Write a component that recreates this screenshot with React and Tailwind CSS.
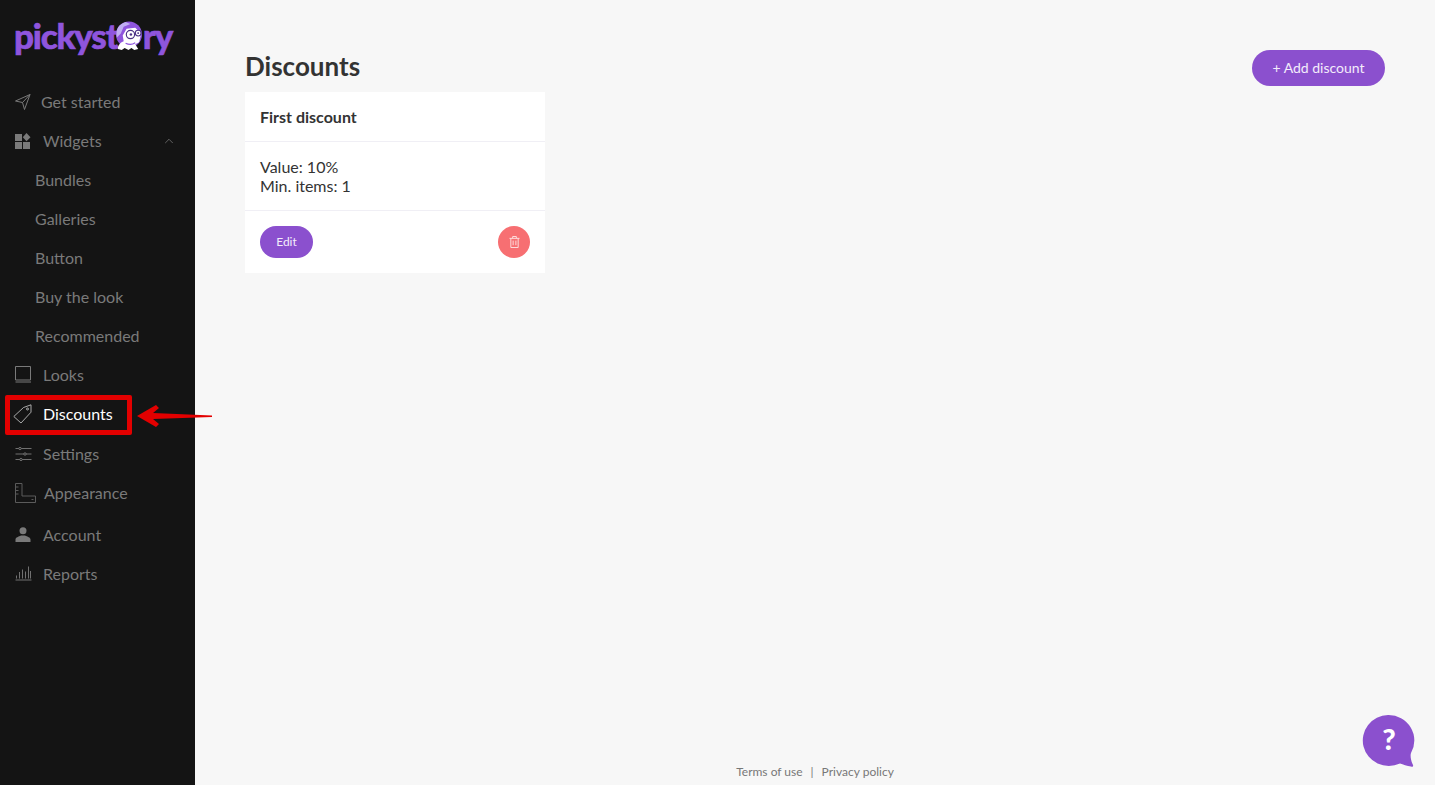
import { ChevronUp } from 'lucide-react';

// ─── Sidebar icons ────────────────────────────────────────────────────────────
const stroke = { fill: 'none', stroke: 'currentColor', strokeWidth: 1 };

const icons = {
    send: (
        <svg width="16" height="16" viewBox="0 0 16 16" {...stroke}>
            <path d="M15 .5.5 7l7 1.500 2 7L15 .5ZM15 .5 7.500 8.500" strokeLinejoin="round" />
        </svg>
    ),
    widgets: (
        <svg width="16" height="16" viewBox="0 0 16 16" fill="currentColor">
            <rect x="0" y="1" width="7" height="7" />
            <rect x="0" y="9" width="7" height="7" />
            <rect x="8" y="9" width="7" height="7" />
            <path d="M11.500 0 15.500 4.200 11.500 8.200 7.800 4.200Z" />
        </svg>
    ),
    looks: (
        <svg width="17" height="17" viewBox="0 0 17 17" {...stroke}>
            <path d="M.5.5h15v13.500H.5zM.5 16h15.500" />
        </svg>
    ),
    tag: (
        <svg width="19" height="20" viewBox="0 0 19 20" {...stroke} strokeWidth="0.8" className="opacity-80">
            <path d="M10.500 3.500 18 .8v7.400L8 19 .8 12.500 10.500 3.500Z" strokeLinejoin="round" />
            <circle cx="14.500" cy="5" r="1" />
        </svg>
    ),
    settings: (
        <svg width="17" height="14" viewBox="0 0 17 14" {...stroke} strokeWidth="0.9">
            <path d="M.5 1.500h16M.5 7h16M.5 12.500h16" />
            <circle cx="5" cy="1.500" r="1.200" fill="#141414" />
            <circle cx="10" cy="7" r="1.200" fill="#141414" />
            <circle cx="6" cy="12.500" r="1.200" fill="#141414" />
        </svg>
    ),
    appearance: (
        <svg width="21" height="20" viewBox="0 0 21 20" {...stroke} className="opacity-70">
            <path d="M.5.500h6.500v12.500h13.500v6.500H.5zM.5 4h3M.5 7.500h3M.5 11h3M16.500 16.500h2" />
        </svg>
    ),
    account: (
        <svg width="16" height="15" viewBox="0 0 16 15" fill="currentColor">
            <circle cx="8" cy="3.700" r="3.500" />
            <path d="M.5 15v-2.500C.5 10.500 3.500 9.500 6 8.500h4c2.500 1 5.500 2 5.500 4V15Z" />
        </svg>
    ),
    reports: (
        <svg width="17" height="15" viewBox="0 0 17 15" {...stroke} strokeWidth="0.9">
            <path d="M.5 14h16M1.500 12.500V9.500M4.500 12.500V6M7.500 12.500V3.500M10.500 12.500V5.500M13.500 12.500V.5M15.500 12.500V5" />
        </svg>
    ),
};

// ─── Nav data ─────────────────────────────────────────────────────────────────
const navItems = [
    { label: 'Get started', icon: 'send', width: 'w-[26px]' },
    { label: 'Widgets', icon: 'widgets', width: 'w-[28px]', chevron: true },
    { label: 'Bundles', sub: true },
    { label: 'Galleries', sub: true },
    { label: 'Button', sub: true },
    { label: 'Buy the look', sub: true },
    { label: 'Recommended', sub: true },
    { label: 'Looks', icon: 'looks', width: 'w-[28px]' },
    { label: 'Discounts', icon: 'tag', width: 'w-[30px]', active: true, left: 'pl-[13px]' },
    { label: 'Settings', icon: 'settings', width: 'w-[28px]', spacing: 'mt-px' },
    { label: 'Appearance', icon: 'appearance', width: 'w-[29px]' },
    { label: 'Account', icon: 'account', width: 'w-[28px]', spacing: 'mt-[3px]' },
    { label: 'Reports', icon: 'reports', width: 'w-[28px]' },
];

function NavItem({ item }) {
    if (item.sub) {
        return <div className="h-[39px] flex items-center pl-[35px] text-[#7a7a7a]">{item.label}</div>;
    }
    return (
        <div className={`h-[39px] flex items-center pr-5 ${item.left || 'pl-[15px]'} ${item.spacing || ''} ${item.active ? 'text-white' : 'text-[#7a7a7a]'}`}>
            <span className={`flex items-center ${item.width}`}>
                {icons[item.icon]}
            </span>
            <span>{item.label}</span>
            {item.chevron && <ChevronUp className="ml-auto mr-[-1px] w-3.5 h-3.5 text-[#999]" strokeWidth={1} />}
        </div>
    );
}

function Logo() {
    return (
        <div className="h-[82px] pt-[13px] pl-[14px]">
            <div className="flex items-center text-[35px] leading-[44px] font-black text-[#8f55dd] tracking-[-1.2px] [-webkit-text-stroke:0.6px_#8f55dd] font-['Lato',sans-serif]">
                <span>pickyst</span>
                <svg width="28" height="30" viewBox="0 0 29 31" className="-ml-[3px] mt-[1px] shrink-0">
                    <circle cx="14.500" cy="14" r="13.500" fill="#8f55dd" />
                    <path d="M11 1C4 3 0 9 2 17l4-4 3-7 7-3Z" fill="#c0aef2" />
                    <path d="M3 29c0-4 3-7 6-8l-1-6 4-7 9-1 6 6-2 9-4 2 3 5-4 1-3-2-3 2-4-2-3 2-4-1Z" fill="#fff" />
                    <circle cx="16" cy="14" r="4.300" fill="#fff" stroke="#4a3285" strokeWidth="1.200" />
                    <circle cx="24" cy="12.500" r="3" fill="#fff" stroke="#4a3285" strokeWidth="1.200" />
                    <circle cx="16.500" cy="14" r="1.300" fill="#4a3285" />
                    <circle cx="24" cy="12.500" r="1" fill="#4a3285" />
                    <path d="M11 23c3 1.500 7 1.500 10-.5" fill="none" stroke="#8f55dd" strokeWidth="1.300" />
                </svg>
                <span>ry</span>
            </div>
        </div>
    );
}

function TrashIcon() {
    return (
        <svg width="11" height="12" viewBox="0 0 12 13" fill="none" stroke="currentColor" strokeWidth="1">
            <path d="M.5 2.500h11M4 2.500V.5h4v2M2 2.500v10h8v-10M4.500 5v5M7.500 5v5" />
        </svg>
    );
}

function DiscountCard() {
    return (
        <div className="w-[300px] h-[181px] bg-white flex flex-col">
            <div className="h-[50px] px-[15px] flex items-center font-bold border-b border-[#f0eff5]">First discount</div>
            <div className="h-[69px] px-[15px] flex flex-col justify-center leading-[19px] border-b border-[#f0eff5]">
                <div>Value: 10%</div>
                <div>Min. items: 1</div>
            </div>
            <div className="flex-1 px-[15px] flex items-center justify-between">
                <button className="w-[53px] h-8 rounded-full bg-[#8b50ce] text-[#f3ecfb] text-xs">Edit</button>
                <button className="w-8 h-8 rounded-full bg-[#f76f72] text-[#fde4e4] flex items-center justify-center">
                    <TrashIcon />
                </button>
            </div>
        </div>
    );
}

export default function App() {
    return (
        <div className="relative flex h-[785px] overflow-hidden bg-[#f7f7f7] text-base text-[#333] font-['Lato',sans-serif]">
            <aside className="w-[195px] shrink-0 bg-[#141414]">
                <Logo />
                {navItems.map((item) => <NavItem key={item.label} item={item} />)}
            </aside>

            <main className="flex-1 flex flex-col px-[50px]">
                <div className="h-[92px] flex items-start justify-between pt-[50px]">
                    <h1 className="text-[26px] leading-[33px] font-bold">Discounts</h1>
                    <button className="w-[133px] h-9 rounded-full bg-[#8b50ce] text-[#f3ecfb] text-sm">+ Add discount</button>
                </div>
                <DiscountCard />
                <footer className="mt-auto h-[27px] flex items-center justify-center gap-2 text-xs text-[#777]">
                    <span>Terms of use</span>
                    <span>|</span>
                    <span>Privacy policy</span>
                </footer>
            </main>

            {/* Chat bubble */}
            <svg className="absolute left-[1362px] top-[715px]" width="53" height="52" viewBox="0 0 53 52">
                <path d="M26 0a26 25.500 0 0 1 23 38c-1 3 0 8 2 12 .5 1.500-.5 2-2 1.500-4-.5-8-2-11-3A26 25.500 0 1 1 26 0Z" fill="#8b50ce" />
                <text x="27" y="35" textAnchor="middle" fontSize="29" fontWeight="900" fill="#fff" fontFamily="Lato, sans-serif">?</text>
            </svg>

            {/* Red annotation box and arrow */}
            <div className="absolute left-[5px] top-[395px] w-[127px] h-[40px] border-[5px] border-[#e30000] rounded-[2px]" />
            <svg className="absolute left-[136px] top-[403px]" width="78" height="26" viewBox="0 0 78 26">
                <path d="M1 13 20 2l3 3-6 5 59 2.500v1.500L17 16l6 5-3 3Z" fill="#e30000" />
            </svg>
        </div>
    );
}
